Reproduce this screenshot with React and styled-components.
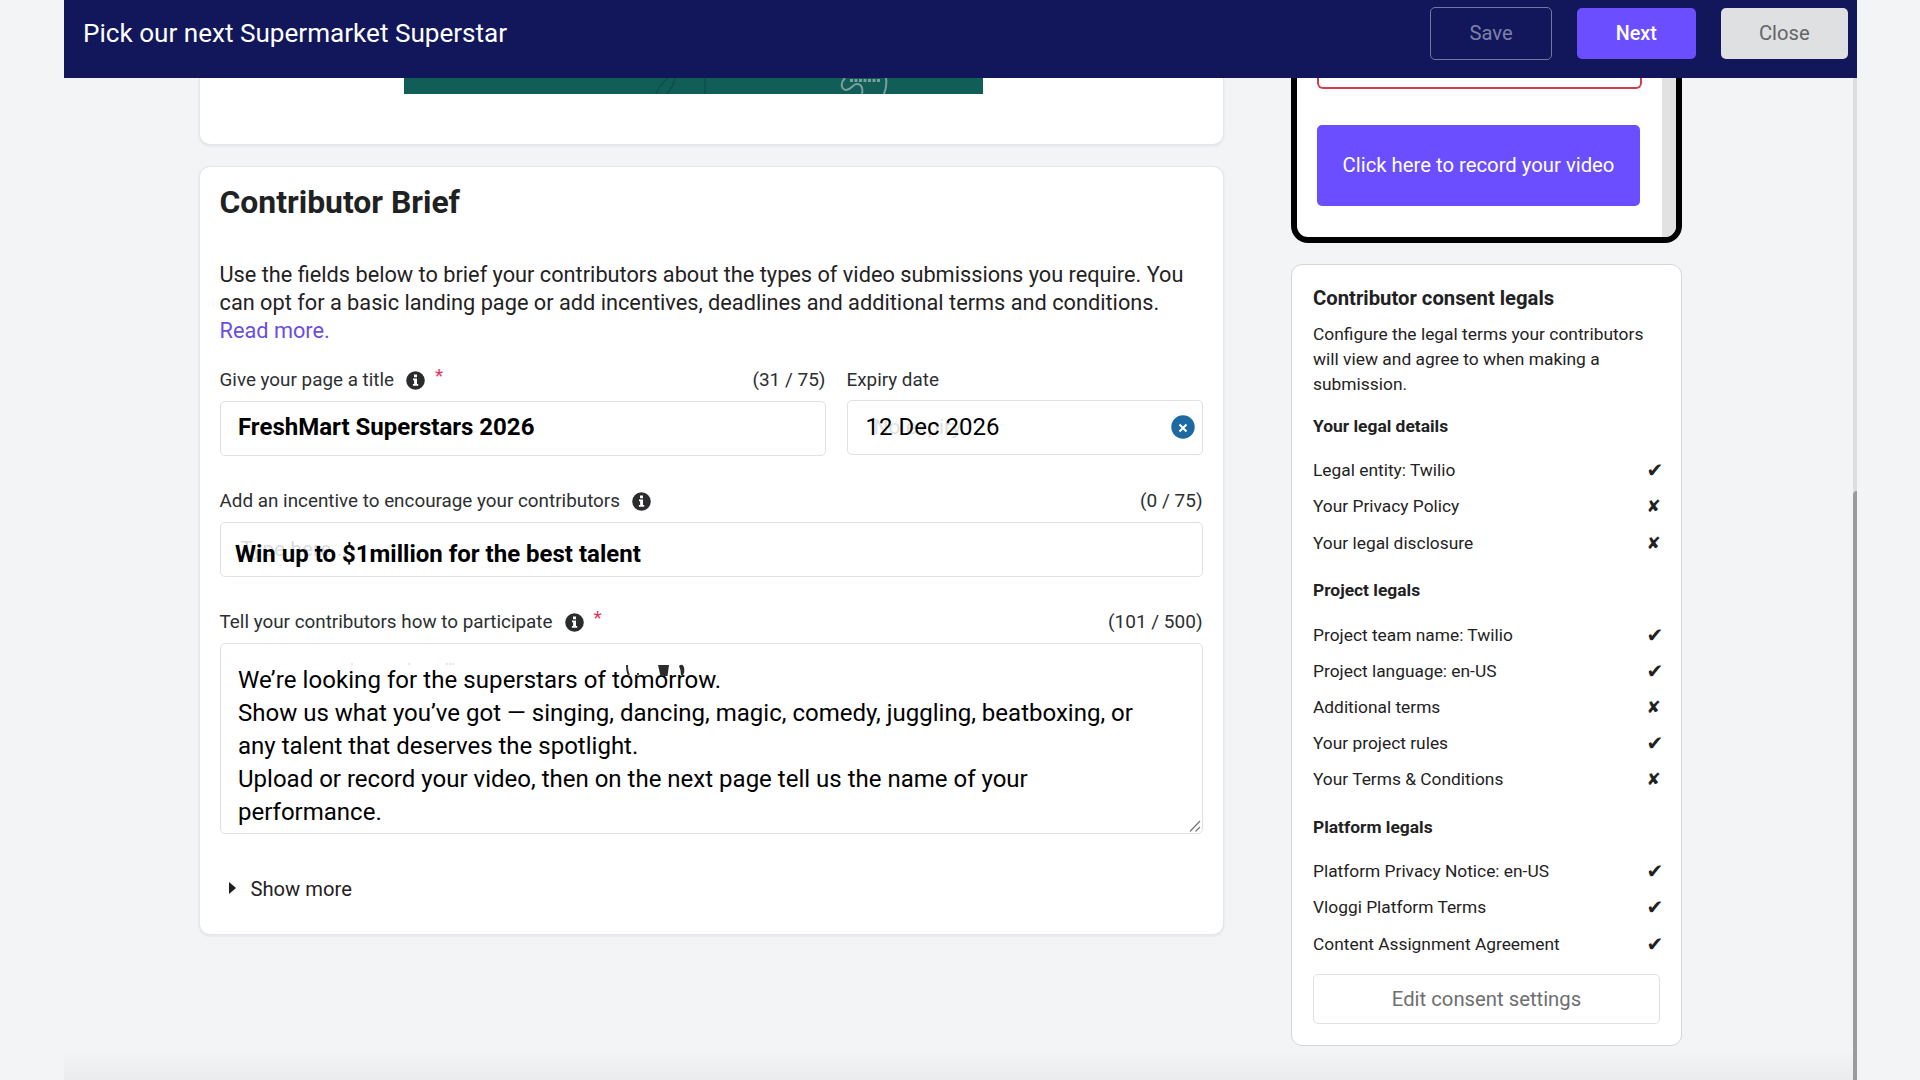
import React from 'react';
import styled, { createGlobalStyle } from 'styled-components';

const GlobalStyle = createGlobalStyle`
  * {
    box-sizing: border-box;
  }
  body {
    margin: 0;
    background: #f2f4f6;
    font-family: Roboto, 'Liberation Sans', sans-serif;
    color: #1f2223;
    overflow: hidden;
  }
  h1, h2, h3, h4, p {
    margin: 0;
  }
  button, textarea, input {
    font-family: inherit;
    margin: 0;
  }
`;

const Page = styled.div`
  width: 1793px;
  height: 1080px;
  margin-left: 64px;
  display: flex;
  flex-direction: column;
  overflow: hidden;
  position: relative;
`;

const Header = styled.header`
  flex: none;
  height: 78px;
  padding: 0 9px 12px 19px;
  background: #11175a;
  display: flex;
  align-items: center;
`;

const HeaderTitle = styled.h1`
  flex: 1;
  font-size: 26.1px;
  font-weight: 400;
  color: #fff;
`;

const HeaderButton = styled.button`
  width: ${(p) => p.$width}px;
  height: 51px;
  margin-left: 25px;
  padding: 0;
  border: none;
  border-radius: 5px;
  font-size: 20.2px;
  background: ${(p) => p.$bg};
  color: ${(p) => p.$color};
  font-weight: ${(p) => p.$weight || 400};
`;

const SaveButton = styled(HeaderButton)`
  height: 53px;
  border: 1px solid #7477a0;
`;

const NextButton = styled(HeaderButton)`
  font-size: 19.8px;
`;

const Body = styled.main`
  flex: 1;
  min-height: 0;
  display: flex;
`;

const MainColumn = styled.div`
  width: 1025px;
  margin-left: 134.5px;
`;

const Card = styled.section`
  background: #fff;
  border: 1px solid #e4e6ea;
  box-shadow: 0 1px 3px rgba(20, 30, 60, 0.08);
`;

const BannerCard = styled(Card)`
  height: 67px;
  border-top: none;
  border-radius: 0 0 11px 11px;
  padding-left: 204.5px;
`;

const Banner = styled.svg`
  display: block;
  width: 579px;
  height: 16px;
  background: #115d57;
`;

const BriefCard = styled(Card)`
  margin-top: 21px;
  height: 769px;
  border-radius: 11px;
  padding: 15px 20px 0;
`;

const BriefTitle = styled.h2`
  font-size: 31.9px;
  line-height: 40px;
  font-weight: 700;
`;

const Intro = styled.p`
  margin-top: 38.5px;
  font-size: 21.74px;
  line-height: 28px;
  white-space: nowrap;
`;

const Link = styled.span`
  color: #6a4ee0;
`;

const FieldRow = styled.div`
  display: flex;
  gap: 21px;
`;

const Field = styled.div`
  width: ${(p) => p.$width || 983}px;
  margin-top: ${(p) => p.$top || 0}px;
`;

const FieldHeader = styled.div`
  height: 24px;
  display: flex;
  align-items: center;
  font-size: 18.85px;
  line-height: 24px;
  color: #2c2f30;
  white-space: nowrap;
`;

const InfoIcon = styled.svg`
  width: 19px;
  height: 19px;
  margin-left: 12px;
`;

const Required = styled.span`
  margin-left: 10px;
  padding-bottom: 9px;
  font-size: 19px;
  color: #e2365f;
`;

const Counter = styled.span`
  margin-left: auto;
  font-size: 19px;
`;

const Box = styled.div`
  position: relative;
  height: 55px;
  margin-top: ${(p) => p.$top}px;
  padding: ${(p) => p.$pad};
  border: 1px solid #e0e1e3;
  border-radius: 5px;
  display: flex;
  align-items: center;
  font-size: 24px;
  font-weight: ${(p) => p.$weight || 400};
  color: #000;
  white-space: nowrap;
`;

const Placeholder = styled.span`
  position: absolute;
  left: ${(p) => p.$left}px;
  top: 13px;
  font-size: 21px;
  font-weight: 400;
  line-height: 26px;
  color: ${(p) => p.$color || '#d9dcdd'};
`;

const BoxText = styled.span`
  position: relative;
`;

const ClearIcon = styled.svg`
  width: 24px;
  height: 24px;
  margin-left: auto;
`;

const TextBox = styled.div`
  position: relative;
  height: 191px;
  margin-top: 9px;
  padding: 20px 17px 0 17.5px;
  border: 1px solid #e0e1e3;
  border-radius: 5px;
  font-size: 24.03px;
  line-height: 33px;
  color: #000;
  white-space: pre;

  &::first-line {
    letter-spacing: 0.06px;
  }
`;

const Marks = styled.svg`
  position: absolute;
  left: 130px;
  top: 18px;
  width: 340px;
  height: 18px;
`;

const Grip = styled.svg`
  position: absolute;
  right: 1px;
  bottom: 1px;
  width: 12px;
  height: 12px;
`;

const ShowMore = styled.div`
  margin-top: 40.5px;
  padding-left: 9px;
  display: flex;
  align-items: center;
  gap: 15px;
  font-size: 20.2px;
  line-height: 28px;
`;

const ShowMoreArrow = styled.svg`
  width: 7px;
  height: 14px;
  margin-bottom: 2px;
`;

const SideColumn = styled.aside`
  width: 391px;
  margin-left: 67.5px;
`;

const Phone = styled.div`
  height: 165px;
  border: 6px solid #000;
  border-top: none;
  border-radius: 0 0 17px 17px;
  background: #fff;
  padding-left: 20px;
  display: flex;
  justify-content: space-between;
  overflow: hidden;
`;

const ErrorBox = styled.div`
  width: 325px;
  height: 11px;
  border: 2px solid #d23c4a;
  border-top: none;
  border-radius: 0 0 6px 6px;
`;

const RecordButton = styled.button`
  width: 323px;
  height: 81px;
  margin-top: 36px;
  padding: 0 0 2px;
  border: none;
  border-radius: 5px;
  background: #6b4eff;
  color: #fff;
  font-size: 20.3px;
  white-space: nowrap;
`;

const PhoneGutter = styled.div`
  width: 14px;
  background: #e2e2e2;
`;

const ConsentCard = styled.section`
  margin-top: 21px;
  height: 782px;
  padding: 21px 21px 0;
  background: #fff;
  border: 1px solid #d3d6db;
  border-radius: 11px;
`;

const ConsentTitle = styled.h3`
  font-size: 20.25px;
  line-height: 24px;
  font-weight: 700;
`;

const ConsentText = styled.p`
  margin-top: 11.5px;
  font-size: 17.4px;
  line-height: 25px;
  white-space: nowrap;
`;

const GroupTitle = styled.h4`
  margin-top: ${(p) => p.$top}px;
  margin-bottom: 14.2px;
  font-size: 17.4px;
  line-height: 24px;
  font-weight: 700;
`;

const LegalRow = styled.div`
  height: 36.2px;
  display: flex;
  justify-content: space-between;
  align-items: center;
  font-size: 17.35px;
  white-space: nowrap;
`;

const Mark = styled.span`
  width: 13.5px;
  font-family: 'DejaVu Sans', sans-serif;
  font-size: ${(p) => (p.$done ? 20 : 17)}px;
  line-height: 24px;
`;

const EditButton = styled.button`
  display: block;
  width: 347px;
  height: 50px;
  margin-top: 12.5px;
  padding: 0;
  background: #fff;
  border: 1px solid #e0e1e3;
  border-radius: 5px;
  font-size: 20.3px;
  color: #6d6f70;
`;

const ScrollTrack = styled.div`
  width: 4px;
  margin-left: auto;
  padding-top: 413px;
  background: #dcdee0;
`;

const ScrollThumb = styled.div`
  height: 100%;
  background: #999b9d;
  border-radius: 4px 0 0 0;
`;

const BottomFade = styled.div`
  position: absolute;
  left: 0;
  right: 4px;
  bottom: 0;
  height: 30px;
  background: linear-gradient(rgba(0, 0, 0, 0), rgba(0, 0, 0, 0.035));
`;

const legals = [
  {
    title: 'Your legal details',
    items: [
      ['Legal entity: Twilio', true],
      ['Your Privacy Policy', false],
      ['Your legal disclosure', false],
    ],
  },
  {
    title: 'Project legals',
    items: [
      ['Project team name: Twilio', true],
      ['Project language: en-US', true],
      ['Additional terms', false],
      ['Your project rules', true],
      ['Your Terms & Conditions', false],
    ],
  },
  {
    title: 'Platform legals',
    items: [
      ['Platform Privacy Notice: en-US', true],
      ['Vloggi Platform Terms', true],
      ['Content Assignment Agreement', true],
    ],
  },
];

function Info() {
  return (
    <InfoIcon viewBox="0 0 19 19">
      <circle cx="9.5" cy="9.5" r="9.3" fill="#2a2c2d" />
      <path d="M8 3.6h3v2.6H8zM7 7.5h4v5.6h1.2v1.7H6.9v-1.7h1.2V9.2H7z" fill="#fff" />
    </InfoIcon>
  );
}

export default function App() {
  return (
    <>
      <GlobalStyle />
      <Page>
        <Header>
          <HeaderTitle>Pick our next Supermarket Superstar</HeaderTitle>
          <SaveButton $width={122} $bg="transparent" $color="#7d80a8">Save</SaveButton>
          <NextButton $width={118.5} $bg="#6b4eff" $color="#fff" $weight={500}>Next</NextButton>
          <HeaderButton $width={127.5} $bg="#dfe0e2" $color="#636567">Close</HeaderButton>
        </Header>
        <Body>
          <MainColumn>
            <BannerCard>
              <Banner viewBox="0 0 579 16" fill="none">
                <path d="M252 16c3-7 7-12 12-16M263 16c4-5 7-11 8-16M301 0v16" stroke="#0d4f4a" strokeWidth="1.5" />
                <path d="M441 0c-5 5-4 11 1 12 6 0 6-6 11-6 5 0 6 5 5 10M482 0c1 6 0 11-2 16" stroke="#7b9f9a" strokeWidth="2" />
                <path d="M446 2.5h31" stroke="#7b9f9a" strokeWidth="3" strokeDasharray="3 1.5" />
              </Banner>
            </BannerCard>
            <BriefCard>
              <BriefTitle>Contributor Brief</BriefTitle>
              <Intro>
                Use the fields below to brief your contributors about the types of video submissions you require. You
                <br />
                can opt for a basic landing page or add incentives, deadlines and additional terms and conditions.
                <br />
                <Link>Read more.</Link>
              </Intro>
              <FieldRow>
                <Field $width={606} $top={23.5}>
                  <FieldHeader>
                    Give your page a title <Info />
                    <Required>*</Required>
                    <Counter>(31 / 75)</Counter>
                  </FieldHeader>
                  <Box $top={9} $pad="0 17px 3px 17.5px" $weight={700}>FreshMart Superstars 2026</Box>
                </Field>
                <Field $width={356} $top={23.5}>
                  <FieldHeader>Expiry date</FieldHeader>
                  <Box $top={8} $pad="0 7px 1px 18px">
                    <Placeholder $left={26} $color="#dfe1e2">No expiry</Placeholder>
                    <BoxText>12 Dec 2026</BoxText>
                    <ClearIcon viewBox="0 0 24 24">
                      <circle cx="12" cy="12" r="11.7" fill="#1f69a3" />
                      <path d="M8.5 9.5l7 7M15.5 9.5l-7 7" stroke="#fff" strokeWidth="2" />
                    </ClearIcon>
                  </Box>
                </Field>
              </FieldRow>
              <Field $top={33}>
                <FieldHeader>
                  Add an incentive to encourage your contributors <Info />
                  <Counter>(0 / 75)</Counter>
                </FieldHeader>
                <Box $top={9} $pad="8px 14px 0 14.5px" $weight={700}>
                  <Placeholder $left={20}>Type here...</Placeholder>
                  <BoxText>Win up to $1million for the best talent</BoxText>
                </Box>
              </Field>
              <Field $top={33}>
                <FieldHeader>
                  Tell your contributors how to participate <Info />
                  <Required>*</Required>
                  <Counter>(101 / 500)</Counter>
                </FieldHeader>
                <TextBox>
                  {'We’re looking for the superstars of tomorrow.\nShow us what you’ve got — singing, dancing, magic, comedy, juggling, beatboxing, or\nany talent that deserves the spotlight.\nUpload or record your video, then on the next page tell us the name of your\nperformance.'}
                  <Marks viewBox="0 0 340 18">
                    <path d="M0 2h3M57 2h3M95 2h9" stroke="#d0d0d0" strokeDasharray="2 1" />
                    <path d="M276 3q0 7 2 10M286 12h2" stroke="#333" strokeWidth="2" fill="none" />
                    <path d="M307 3h11l-1.5 11h-7z" fill="#2c2c2c" />
                    <path d="M328 4q3-3 5 1 1 5-1 8h-2q0-5-2-9z" fill="#2c2c2c" />
                  </Marks>
                  <Grip viewBox="0 0 12 12">
                    <path d="M1 11.5L11 1M6.5 11.5L11 7" stroke="#777" strokeWidth="1.2" />
                  </Grip>
                </TextBox>
              </Field>
              <ShowMore>
                <ShowMoreArrow viewBox="0 0 7 14"><path d="M0 1l7 6-7 6z" fill="#1b1d1e" /></ShowMoreArrow>
                Show more
              </ShowMore>
            </BriefCard>
          </MainColumn>
          <SideColumn>
            <Phone>
              <div>
                <ErrorBox />
                <RecordButton>Click here to record your video</RecordButton>
              </div>
              <PhoneGutter />
            </Phone>
            <ConsentCard>
              <ConsentTitle>Contributor consent legals</ConsentTitle>
              <ConsentText>
                Configure the legal terms your contributors
                <br />
                will view and agree to when making a
                <br />
                submission.
              </ConsentText>
              {legals.map((group, i) => (
                <div key={group.title}>
                  <GroupTitle $top={i === 0 ? 17.5 : 17.5}>{group.title}</GroupTitle>
                  {group.items.map(([label, done]) => (
                    <LegalRow key={label}>
                      <span>{label}</span>
                      <Mark $done={done}>{done ? '✔' : '✘'}</Mark>
                    </LegalRow>
                  ))}
                </div>
              ))}
              <EditButton>Edit consent settings</EditButton>
            </ConsentCard>
          </SideColumn>
          <ScrollTrack>
            <ScrollThumb />
          </ScrollTrack>
        </Body>
        <BottomFade />
      </Page>
    </>
  );
}
